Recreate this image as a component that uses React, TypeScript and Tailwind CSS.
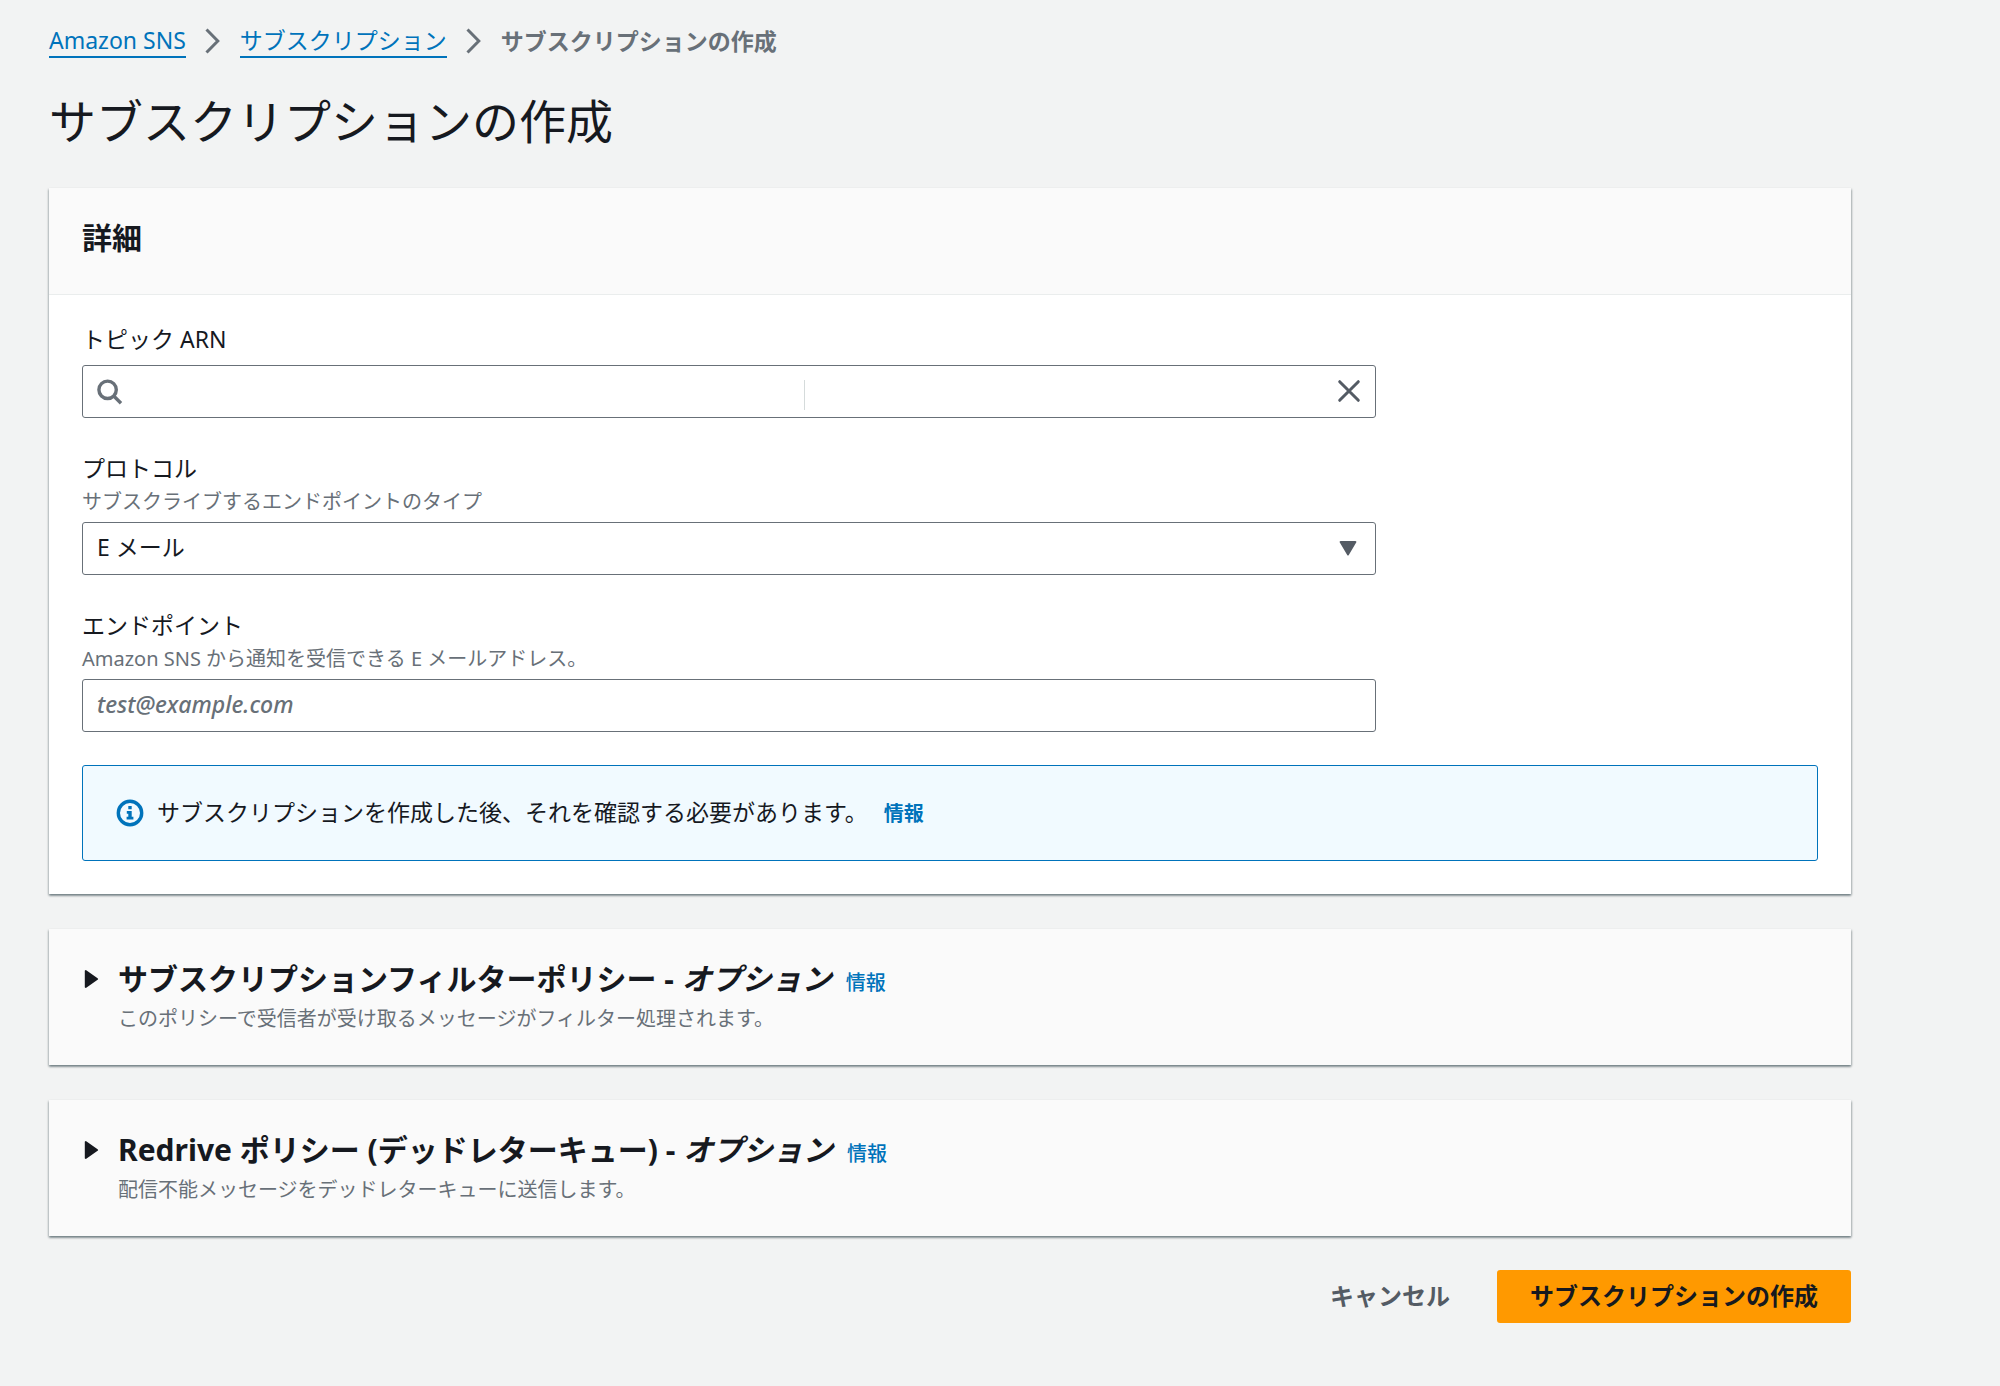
import { useState, type ReactNode } from "react";

const Chevron = () => (
    <svg width="16" height="26" viewBox="0 0 16 26" fill="none" stroke="#687078" strokeWidth="3" aria-hidden="true">
        <path d="M1.5 1.5 12.8 13 1.5 24.5" />
    </svg>
);

const InfoLink = ({ bold = false }: { bold?: boolean }) => (
    <a href="#" className={bold ? "text-[20px] font-bold text-[#0073bb]" : "text-[20px] font-medium not-italic text-[#0073bb]"}>
        情報
    </a>
);

function ExpandablePanel({ title, description }: { title: ReactNode; description: string }) {
    const [open, setOpen] = useState(false);

    return (
        <section className="mt-[35px] flex gap-[18px] bg-[#fafafa] px-[35px] pt-7 pb-[30px] shadow-[0_2px_2px_0_rgba(0,28,36,0.35),1px_1px_2px_0_rgba(0,28,36,0.2),-1px_1px_2px_0_rgba(0,28,36,0.15)]">
            <button
                type="button"
                aria-label="展開"
                aria-expanded={open}
                onClick={() => setOpen(!open)}
                className="flex h-11 items-center"
            >
                <svg width="16" height="18" viewBox="0 0 16 18" fill="#16191f" aria-hidden="true">
                    <path d="M2.6 .5 13.6 8.2a1 1 0 0 1 0 1.6L2.6 17.5a1 1 0 0 1-1.8-.8V1.3A1 1 0 0 1 2.6 .5Z" />
                </svg>
            </button>
            <div>
                <div className="flex items-baseline gap-[14px]">
                    <h2 className="text-[30px] leading-11 font-bold">{title}</h2>
                    <InfoLink />
                </div>
                <p className="mt-0.5 text-[20px] leading-8 text-[#687078]">{description}</p>
            </div>
        </section>
    );
}

export default function App() {
    const [topic, setTopic] = useState("");
    const fieldStyle = "h-[53px] w-full rounded-[3px] border border-[#687078] bg-white px-[14px] pb-[3px] text-[23px]";

    return (
        <main className="min-h-screen bg-[#f2f3f3] pr-[149px] pb-16 pl-[49px] font-['Noto_Sans','Noto_Sans_CJK_JP',sans-serif] text-[23px] text-[#16191f]" lang="ja">
            {/* Breadcrumb */}
            <nav aria-label="Breadcrumb" className="flex items-center gap-[19px] pt-6 leading-[32px]">
                <a href="#" className="border-b-2 border-[#0073bb] text-[#0073bb]">Amazon SNS</a>
                <Chevron />
                <a href="#" className="border-b-2 border-[#0073bb] text-[#0073bb]">サブスクリプション</a>
                <Chevron />
                <span className="font-bold text-[#687078]">サブスクリプションの作成</span>
            </nav>

            <h1 className="mt-[30px] text-[47px] leading-[66px]">サブスクリプションの作成</h1>

            <form onSubmit={(e) => e.preventDefault()}>
                {/* Details */}
                <section className="mt-[34px] bg-white shadow-[0_2px_2px_0_rgba(0,28,36,0.35),1px_1px_2px_0_rgba(0,28,36,0.2),-1px_1px_2px_0_rgba(0,28,36,0.15)]">
                    <header className="border-b border-[#eaeded] bg-[#fafafa] px-[33px] pt-7 pb-[34px]">
                        <h2 className="text-[30px] leading-11 font-bold">詳細</h2>
                    </header>

                    <div className="px-[33px] pt-[26px] pb-[33px]">
                        <div className="grid grid-cols-12 gap-x-8">
                            <div className="col-span-9 flex flex-col gap-8">
                                <div>
                                    <label htmlFor="topic" className="block leading-9">トピック ARN</label>
                                    <div className="relative mt-2">
                                        <svg className="absolute top-[14px] left-[15px]" width="26" height="26" viewBox="0 0 26 26" fill="none" stroke="#687078" strokeWidth="3.4" aria-hidden="true">
                                            <circle cx="10.6" cy="10.8" r="8.7" />
                                            <path d="M17 17.2 24 24.2" />
                                        </svg>
                                        <input
                                            id="topic"
                                            type="text"
                                            value={topic}
                                            onChange={(e) => setTopic(e.target.value)}
                                            className="h-[53px] w-full rounded-[3px] border border-[#687078] bg-white px-[52px]"
                                        />
                                        <span className="absolute top-[15px] left-[722px] h-[30px] w-px bg-[#d5dbdb]" />
                                        <button type="button" aria-label="クリア" onClick={() => setTopic("")} className="absolute top-[14px] right-[15px]">
                                            <svg width="24" height="24" viewBox="0 0 24 24" fill="none" stroke="#545b64" strokeWidth="3" strokeLinecap="round" aria-hidden="true">
                                                <path d="m2.7 2.7 18.6 18.6M21.3 2.7 2.7 21.3" />
                                            </svg>
                                        </button>
                                    </div>
                                </div>

                                <div>
                                    <label htmlFor="protocol" className="block leading-9">プロトコル</label>
                                    <p id="protocol-hint" className="text-[20px] leading-8 text-[#687078]">サブスクライブするエンドポイントのタイプ</p>
                                    <div className="relative mt-1">
                                        <select id="protocol" aria-describedby="protocol-hint" className={`${fieldStyle} appearance-none`}>
                                            <option>E メール</option>
                                        </select>
                                        <svg className="pointer-events-none absolute top-[19px] right-[19px]" width="18" height="15" viewBox="0 0 18 15" fill="#545b64" aria-hidden="true">
                                            <path d="M1.6 0h14.8a1 1 0 0 1 .8 1.6L9.8 14a1 1 0 0 1-1.6 0L.8 1.6A1 1 0 0 1 1.6 0Z" />
                                        </svg>
                                    </div>
                                </div>

                                <div>
                                    <label htmlFor="endpoint" className="block leading-9">エンドポイント</label>
                                    <p id="endpoint-hint" className="text-[20px] leading-8 text-[#687078]">Amazon SNS から通知を受信できる E メールアドレス。</p>
                                    <input
                                        id="endpoint"
                                        type="email"
                                        placeholder="test@example.com"
                                        aria-describedby="endpoint-hint"
                                        className={`${fieldStyle} mt-1 placeholder:font-medium placeholder:text-[#687078] placeholder:italic`}
                                    />
                                </div>
                            </div>
                        </div>

                        <div className="mt-[33px] flex h-24 items-center rounded-[3px] border border-[#0073bb] bg-[#f1faff] px-[33px]">
                            <svg width="28" height="28" viewBox="0 0 28 28" fill="none" aria-hidden="true">
                                <circle cx="14" cy="14" r="11.7" stroke="#0073bb" strokeWidth="3.4" />
                                <path fill="#0073bb" d="M12.3 7h3.4v3.3h-3.4zM10.8 12h4.9v5.8h1.7v2.8h-6.8v-2.8h1.7v-3h-1.5z" />
                            </svg>
                            <p className="ml-[13px] leading-9">
                                サブスクリプションを作成した後、それを確認する必要があります。
                                <span className="ml-4"><InfoLink bold /></span>
                            </p>
                        </div>
                    </div>
                </section>

                <ExpandablePanel
                    title={<>サブスクリプションフィルターポリシー - <i>オプション</i></>}
                    description="このポリシーで受信者が受け取るメッセージがフィルター処理されます。"
                />
                <ExpandablePanel
                    title={<>Redrive ポリシー (デッドレターキュー) - <i>オプション</i></>}
                    description="配信不能メッセージをデッドレターキューに送信します。"
                />

                {/* Actions */}
                <div className="mt-[34px] flex justify-end gap-[14px]">
                    <button type="button" className="h-[53px] px-[33px] pb-0.5 text-[24px] font-bold text-[#545b64]">キャンセル</button>
                    <button type="submit" className="h-[53px] rounded-[3px] bg-[#ff9900] px-[33px] pb-0.5 text-[24px] font-bold">サブスクリプションの作成</button>
                </div>
            </form>
        </main>
    );
}
